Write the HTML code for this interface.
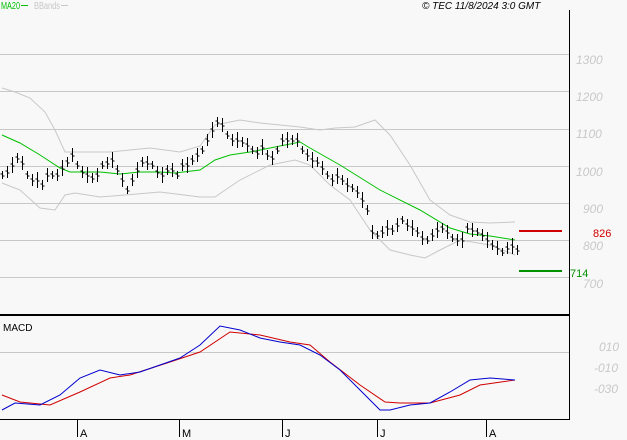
<!DOCTYPE html>
<html><head><meta charset="utf-8"><style>
html,body{margin:0;padding:0;background:#f8f8f8;}
svg{display:block;font-family:"Liberation Sans",sans-serif;}
</style></head><body>
<svg id="s" width="627" height="440" viewBox="0 0 627 440" xmlns="http://www.w3.org/2000/svg">
<rect width="627" height="440" fill="#f8f8f8"/>
<g stroke="#c8c8c8" stroke-width="1" shape-rendering="crispEdges">
<line x1="0" y1="54.5" x2="569" y2="54.5"/>
<line x1="0" y1="91.5" x2="569" y2="91.5"/>
<line x1="0" y1="129.5" x2="569" y2="129.5"/>
<line x1="0" y1="166.5" x2="569" y2="166.5"/>
<line x1="0" y1="203.5" x2="569" y2="203.5"/>
<line x1="0" y1="240.5" x2="569" y2="240.5"/>
<line x1="0" y1="277.5" x2="569" y2="277.5"/>
<line x1="0" y1="352.5" x2="569" y2="352.5"/>
</g>
<g fill="#c8c8c8" font-size="12" font-style="italic">
<text x="576" y="64">1300</text><text x="576" y="101">1200</text><text x="576" y="138">1100</text>
<text x="576" y="176">1000</text><text x="583" y="213">900</text><text x="583" y="250">800</text>
<text x="583" y="288">700</text>
<text x="599" y="351">010</text><text x="594" y="372">-010</text><text x="594" y="393">-030</text>
</g>
<g fill="none" stroke="#c8c8c8" stroke-width="1">
<polyline points="2,88 15,92 30,98 45,112 55,130 65,152 110,152 150,148 180,152 200,146 215,125 240,120 260,123 300,127 320,130 335,128 355,127 375,120 390,135 410,165 430,200 450,215 470,222 490,223 515,222"/>
<polyline points="2,183 20,190 40,208 55,210 65,195 75,193 100,197 125,195 160,192 200,197 215,197 240,180 270,165 295,160 310,165 330,185 350,200 370,230 390,250 410,255 425,258 440,250 460,240 490,245 515,255"/>
</g>
<polyline fill="none" stroke="#00c000" stroke-width="1" points="2,135 20,143 40,155 60,168 70,172 100,172 120,174 140,172 160,172 175,173 200,170 215,160 230,155 250,152 275,147 300,142 310,148 340,165 380,190 420,210 450,228 470,234 490,236 515,240"/>
<g id="bars" stroke="#000" stroke-width="1" shape-rendering="crispEdges"></g>
<line x1="519" y1="231" x2="562" y2="231" stroke="#d00000" stroke-width="2"/>
<line x1="519" y1="271" x2="562" y2="271" stroke="#009000" stroke-width="2"/>
<rect x="590" y="226" width="22" height="12" fill="#f8f8f8"/>
<text x="593" y="237" fill="#d00000" font-size="11">826</text>
<text x="570" y="277" fill="#009000" font-size="11">714</text>
<polyline fill="none" stroke="#d00000" stroke-width="1" points="2,395 20,402 50,405 80,392 110,378 130,375 170,362 200,352 230,332 260,335 290,342 310,345 330,362 360,385 385,402 400,403 430,403 460,395 480,385 515,380"/>
<polyline fill="none" stroke="#0000d0" stroke-width="1" points="2,410 15,403 40,405 60,395 80,378 100,370 120,375 140,372 180,358 200,345 220,326 240,330 260,338 280,342 300,345 320,355 340,370 360,390 380,410 390,410 410,405 430,403 450,392 470,380 490,378 515,380"/>
<line x1="569.5" y1="10" x2="569.5" y2="419" stroke="#000"/>
<line x1="0" y1="315" x2="570" y2="315" stroke="#000" stroke-width="2"/>
<line x1="0" y1="419.5" x2="570" y2="419.5" stroke="#000"/>
<g stroke="#000" shape-rendering="crispEdges">
<line x1="77.5" y1="419" x2="77.5" y2="437"/><line x1="179.5" y1="419" x2="179.5" y2="437"/>
<line x1="282.5" y1="419" x2="282.5" y2="437"/><line x1="377.5" y1="419" x2="377.5" y2="437"/>
<line x1="486.5" y1="419" x2="486.5" y2="437"/>
</g>
<g font-size="11" fill="#000">
<text x="80" y="437">A</text><text x="182" y="437">M</text><text x="285" y="437">J</text><text x="380" y="437">J</text><text x="489" y="437">A</text>
</g>
<text x="3" y="331" font-size="10" fill="#000">MACD</text>
<text x="1" y="9" font-size="10" fill="#00c000" textLength="19" lengthAdjust="spacingAndGlyphs">MA20</text>
<line x1="21" y1="5.5" x2="28" y2="5.5" stroke="#00c000"/>
<text x="34" y="9" font-size="10" fill="#c8c8c8" textLength="26" lengthAdjust="spacingAndGlyphs">BBands</text>
<line x1="61" y1="5.5" x2="68" y2="5.5" stroke="#c8c8c8"/>
<text x="422" y="9" font-size="10" font-style="italic" fill="#000">© TEC 11/8/2024 3:0 GMT</text>
</svg>
<script>
var d=[175,172,165,158,163,175,180,180,185,175,175,175,168,162,155,165,172,175,178,175,165,163,160,170,180,190,180,170,162,163,165,172,175,170,170,175,165,165,160,155,150,140,130,122,125,135,140,140,142,145,150,153,147,155,158,150,140,140,140,140,150,155,160,162,168,175,180,176,180,185,188,192,200,210,232,235,232,228,230,225,220,225,228,232,238,240,235,230,228,232,238,240,240,228,230,232,235,240,245,248,252,248,246,250];
var g=document.getElementById('bars'),h='';
for(var i=0;i<d.length;i++){var x=2+i*5+.5,y=d[i],r=4+((i*7)%5);
h+='<line x1="'+x+'" y1="'+(y-r)+'" x2="'+x+'" y2="'+(y+r)+'"/>';
h+='<line x1="'+(x-2)+'" y1="'+(y-1)+'" x2="'+x+'" y2="'+(y-1)+'"/>';
h+='<line x1="'+x+'" y1="'+(y+1)+'" x2="'+(x+2)+'" y2="'+(y+1)+'"/>';}
g.innerHTML=h;
</script>
</body></html>
